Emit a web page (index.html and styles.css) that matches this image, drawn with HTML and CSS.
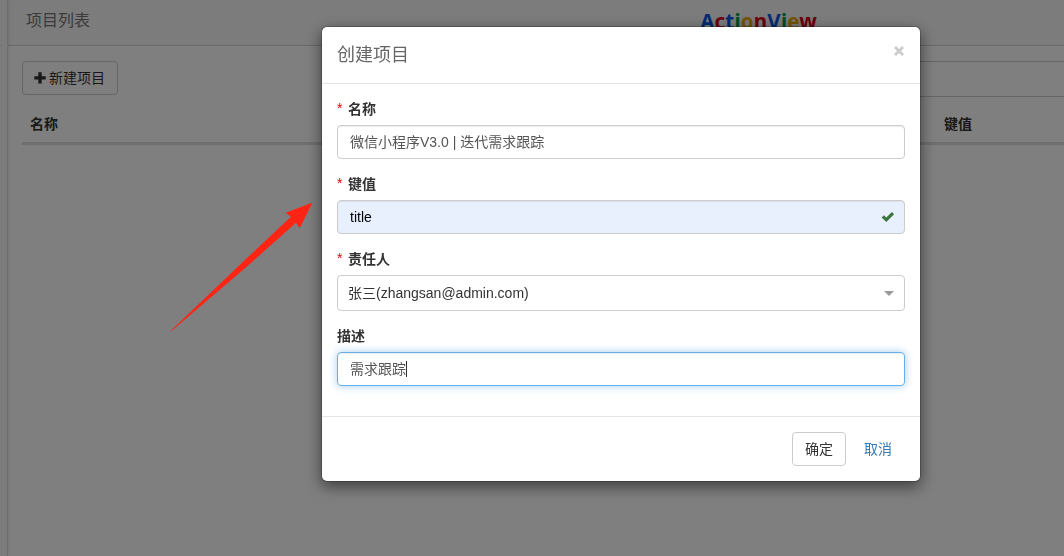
FILE: index.html
```
<!DOCTYPE html>
<html lang="zh-CN">
<head>
  <meta charset="UTF-8">
  <title>项目列表</title>
  <link rel="stylesheet" href="styles.css">
</head>
<body>
  <div class="page">
    <div class="sidebar"><div class="sidebar-top"></div></div>
    <div class="main">
      <div class="header">
        <span class="header-title">项目列表</span>
        <span class="logo"><i class="b">A</i><i class="r">c</i><i class="b">t</i><i class="g">i</i><i class="y">o</i><i class="r">n</i><i class="b">V</i><i class="g">i</i><i class="y">e</i><i class="r">w</i></span>
      </div>
      <div class="content">
        <div class="toolbar">
          <button class="btn btn-create">
            <svg width="12" height="12" viewBox="0 0 12 12"><path d="M4.3 0.3h3.4v4h4v3.3h-4v4H4.3v-4h-4V4.3h4z" fill="#333"/></svg>
            新建项目
          </button>
          <div class="search"></div>
        </div>
        <div class="table-head">
          <span class="col-name">名称</span>
          <span class="col-key">键值</span>
        </div>
      </div>
    </div>
  </div>

  <div class="backdrop">
    <div class="modal">
      <div class="modal-header">
        <span class="modal-title">创建项目</span>
        <svg class="close" width="12" height="12" viewBox="0 0 12 12"><path d="M2 2l8 8M10 2l-8 8" fill="none" stroke="#ccc" stroke-width="2.9"/></svg>
      </div>
      <div class="modal-body">
        <div class="form-group">
          <div class="label"><span class="req">*</span>名称</div>
          <div class="control">微信小程序V3.0 | 迭代需求跟踪</div>
        </div>
        <div class="form-group">
          <div class="label"><span class="req">*</span>键值</div>
          <div class="control autofill">
            title
            <svg class="check" width="14" height="12" viewBox="0 0 14 12"><path d="M1.8 5.4L5.3 8.8L12 2.1" fill="none" stroke="#3c763d" stroke-width="3.2"/></svg>
          </div>
        </div>
        <div class="form-group">
          <div class="label"><span class="req">*</span>责任人</div>
          <div class="control select">张三(zhangsan@admin.com)<span class="arrow-down"></span></div>
        </div>
        <div class="form-group">
          <div class="label">描述</div>
          <div class="control focus">需求跟踪<span class="caret"></span></div>
        </div>
      </div>
      <div class="modal-footer">
        <button class="btn">确定</button>
        <button class="btn btn-link">取消</button>
      </div>
    </div>
  </div>

  <svg class="pointer" width="144" height="132" viewBox="0 0 144 132">
    <path d="M0.8 129.8L77 57L121 15.7L115.8 11.7L142.5 1.5L129.7 27.2L126 21.7L77 65.5L1.2 130.2z" fill="#ff2414"/>
  </svg>
</body>
</html>
```
FILE: styles.css
```
*{
  box-sizing: border-box;
}
body{
  margin:0;
  height:556px;
  overflow:hidden;
  background:#fff;
  color:#333;
  font-family:"Liberation Sans", "Noto Sans CJK SC", sans-serif;
  font-size:14px;
  line-height:20px;
}

/* page behind the dialog */
.page{
  display:flex;
  height:556px;
}
.sidebar{
  position:relative;
  width:8px;
  background:#f8f8f8;
  border-right:1px solid #d9dfdf;
  box-shadow:0 0 4px rgba(0,0,0,0.15);
}
.sidebar-top{
  width:2px;
  height:46px;
  border-bottom:1px solid #ddd;
}
.main{
  flex:1;
  min-width:0;
}
.header{
  display:flex;
  justify-content:space-between;
  height:46px;
  padding:11px 247px 0 18px;
  background:#f8f8f8;
  border-bottom:1px solid #d4d4d4;
}
.header-title{
  font-size:16px;
  color:#777;
}
.logo{
  font:bold 20.5px/20px "Noto Sans", sans-serif;
  letter-spacing:0.2px;
}
.logo i{font-style:normal;}
.logo .b{color:#0057e7;}
.logo .r{color:#d6001c;}
.logo .g{color:#009a44;}
.logo .y{color:#e8a800;}

.content{
  padding:15px 0 0 14px;
}
.toolbar{
  display:flex;
  justify-content:space-between;
  height:36px;
}
.search{
  width:200px;
  height:36px;
  border:1px solid #ccc;
  border-right:0;
}
.table-head{
  display:flex;
  margin-top:17px;
  padding:0 0 8px 8px;
  border-bottom:3px solid #ddd;
  font-weight:bold;
}
.col-name{width:914px;}

.btn{
  height:34px;
  padding:0 12px;
  border:1px solid #ccc;
  border-radius:4px;
  background:#fff;
  color:#333;
  font:inherit;
}
.btn-create{
  display:flex;
  align-items:center;
  gap:3px;
  width:96px;
  padding:0 0 0 11px;
  white-space:nowrap;
}
.btn-link{
  border-color:transparent;
  color:#337ab7;
}

/* dialog */
.backdrop{
  position:fixed;
  inset:0;
  padding:26px 0 0 321px;
  background:rgba(0,0,0,0.5);
}
.modal{
  width:600px;
  border:1px solid rgba(0,0,0,0.2);
  border-radius:6px;
  background:#fff;
  background-clip:padding-box;
  box-shadow:0 5px 15px rgba(0,0,0,0.5);
}
.modal-header{
  display:flex;
  justify-content:space-between;
  height:57px;
  padding:15px;
  border-bottom:1px solid #e5e5e5;
}
.modal-title{
  font-size:18px;
  line-height:26px;
  color:#666;
}
.close{
  margin-top:3px;
}
.modal-body{
  padding:15px 15px 0;
}
.form-group{
  margin-bottom:15px;
}
.form-group:last-child{
  margin-bottom:30px;
}
.label{
  height:21px;
  margin-bottom:5px;
  font-weight:bold;
}
.req{
  display:inline-block;
  width:11px;
  font-weight:normal;
  font-size:14px;
  line-height:16px;
  vertical-align:1px;
  color:#d00;
}
.control{
  display:flex;
  align-items:center;
  height:34px;
  padding:0 12px;
  border:1px solid #ccc;
  border-radius:4px;
  box-shadow:inset 0 1px 1px rgba(0,0,0,0.075);
  color:#555;
}
.autofill{
  justify-content:space-between;
  padding-right:9px;
  background:#e8f0fe;
  color:#000;
}
.select{
  justify-content:space-between;
  height:36px;
  padding:0 10px;
  box-shadow:none;
  color:#333;
}
.arrow-down{
  border:5px solid transparent;
  border-top-color:#999;
  border-bottom:0;
}
.focus{
  border-color:#66afe9;
  box-shadow:inset 0 1px 1px rgba(0,0,0,0.075), 0 0 8px rgba(102,175,233,0.6);
}
.caret{
  width:1px;
  height:16px;
  background:#333;
}
.modal-footer{
  display:flex;
  justify-content:flex-end;
  gap:5px;
  padding:15px;
  border-top:1px solid #e5e5e5;
}

/* red arrow lying over the page */
.pointer{
  position:absolute;
  left:170px;
  top:201px;
}
```
